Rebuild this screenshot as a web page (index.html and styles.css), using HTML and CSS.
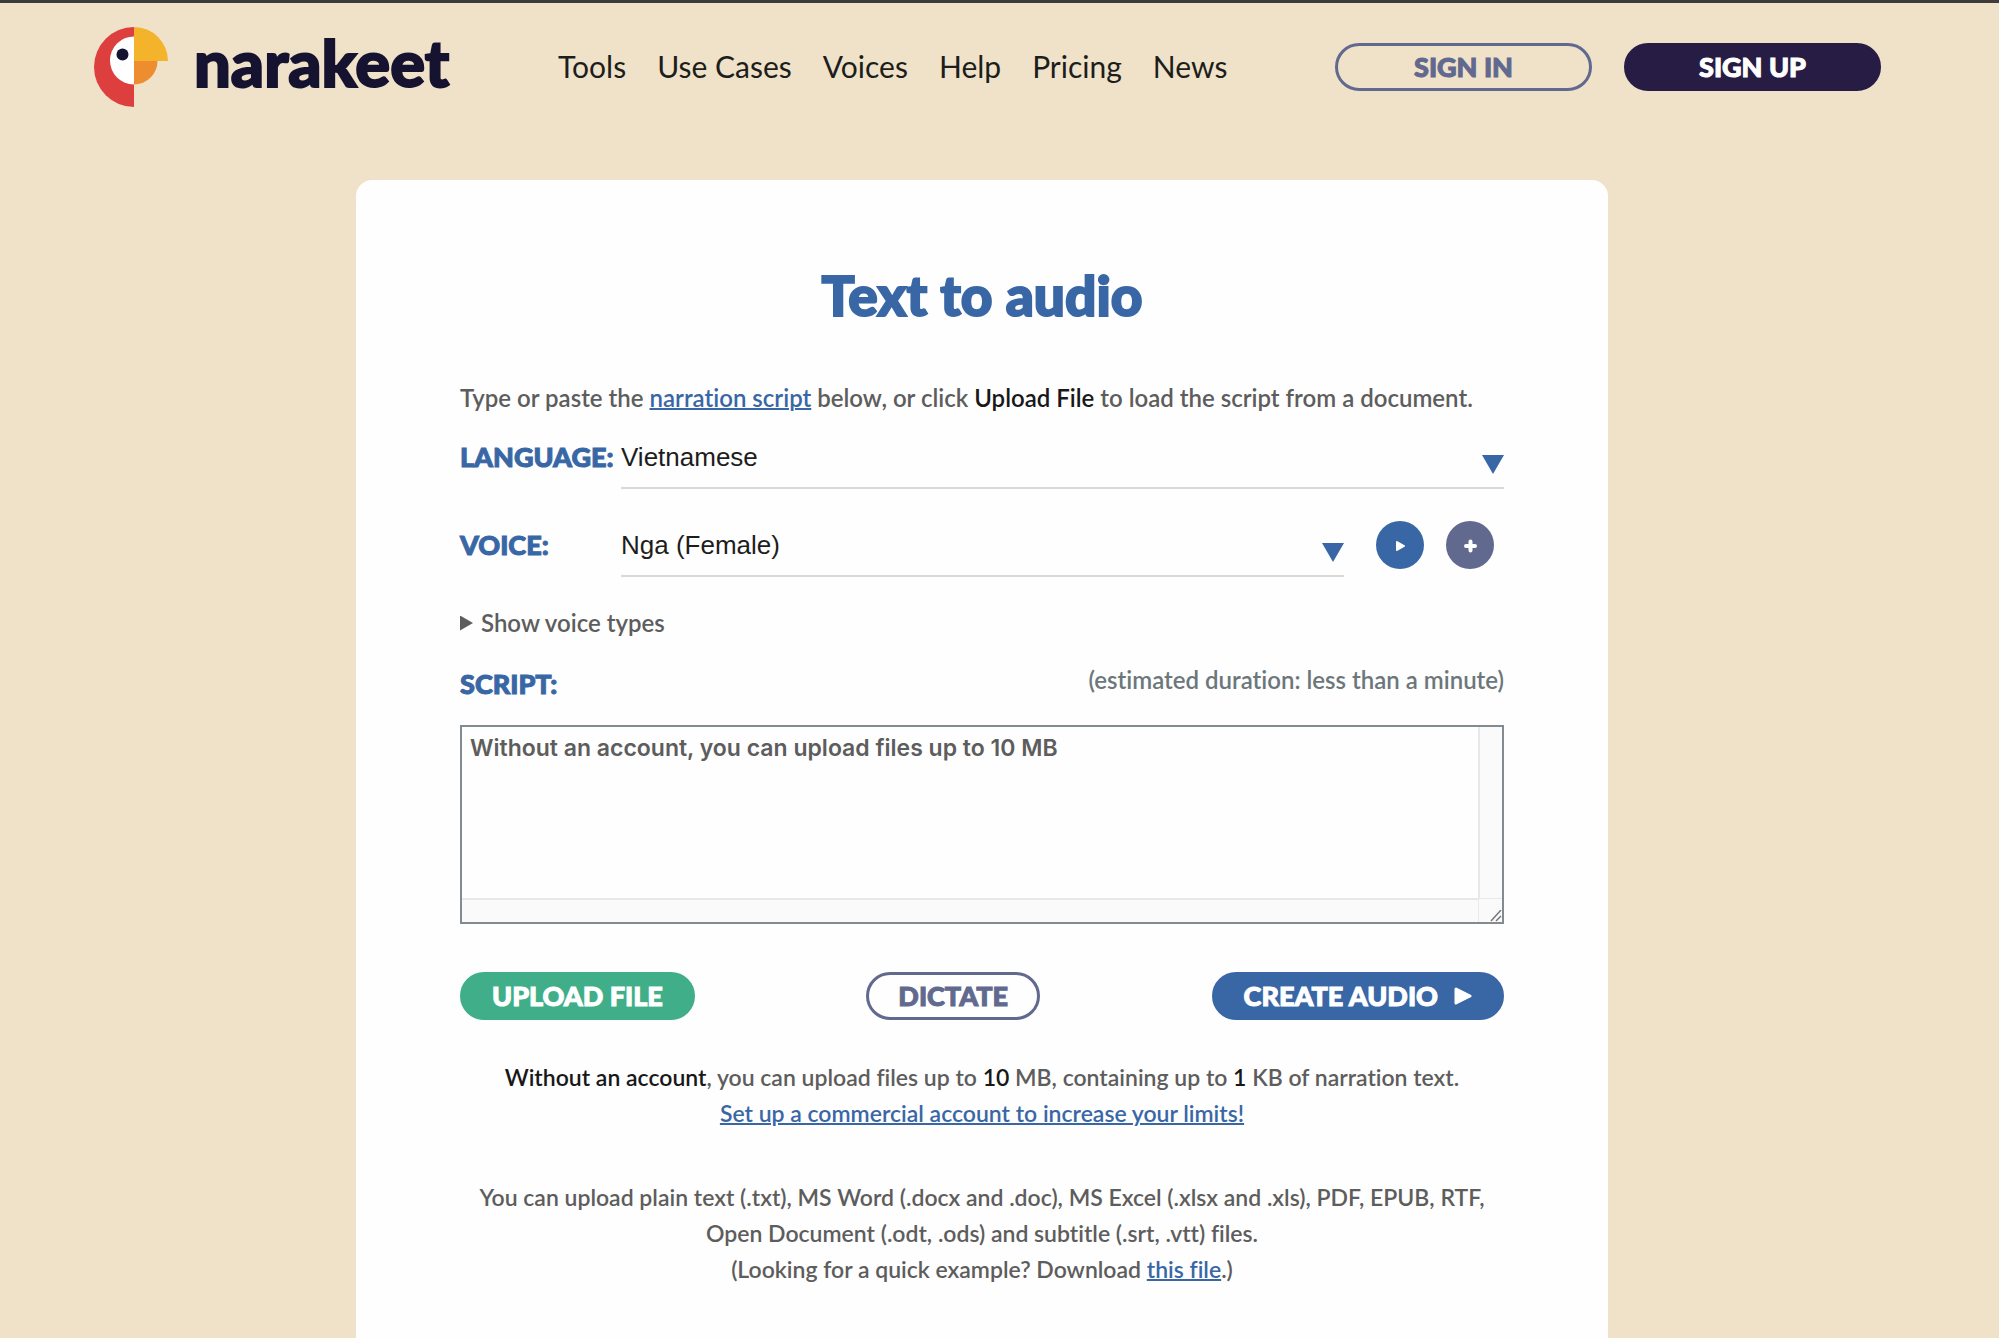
FILE: index.html
```html
<!DOCTYPE html>
<html lang="en">
<head>
<meta charset="utf-8">
<meta name="viewport" content="width=device-width, initial-scale=1">
<title>Text to audio - narakeet</title>
<link rel="stylesheet" href="styles.css">
</head>
<body>
<header class="site-header">
  <a class="brand" href="#">
    <svg class="brand-mark" viewBox="0 0 74 80" aria-hidden="true">
      <path fill="#dd3f3e" d="M40 0A40 40 0 0 0 40 80Z"/>
      <path fill="#fff" d="M40 9.500A24 24 0 0 0 40 57.500Z"/>
      <path fill="#f3b42c" d="M40 0A34 34 0 0 1 74 34H40Z"/>
      <path fill="#ee8d2f" d="M40 34H63.500A23.500 23.500 0 0 1 40 57.500Z"/>
      <circle cx="28.500" cy="27.500" r="6" fill="#15132f"/>
    </svg>
    <span class="brand-name">narakeet</span>
  </a>
  <nav class="site-nav">
    <a href="#">Tools</a>
    <a href="#">Use Cases</a>
    <a href="#">Voices</a>
    <a href="#">Help</a>
    <a href="#">Pricing</a>
    <a href="#">News</a>
  </nav>
  <div class="account">
    <a class="pill pill-outline" href="#">SIGN IN</a>
    <a class="pill pill-dark" href="#">SIGN UP</a>
  </div>
</header>
<main class="page">
  <form class="card">
    <h1 class="title">Text to audio</h1>
    <p class="intro">Type or paste the <a href="#">narration script</a> below, or click <strong>Upload File</strong> to load the script from a document.</p>
    <div class="field">
      <label class="label" for="language">LANGUAGE:</label>
      <div class="picker">
        <select id="language"><option>Vietnamese</option></select>
        <svg class="arrow" viewBox="0 0 22 19" aria-hidden="true"><path d="M0 0H22L11 19Z"/></svg>
      </div>
    </div>
    <div class="field">
      <label class="label" for="voice">VOICE:</label>
      <div class="picker">
        <select id="voice"><option>Nga (Female)</option></select>
        <svg class="arrow" viewBox="0 0 22 19" aria-hidden="true"><path d="M0 0H22L11 19Z"/></svg>
      </div>
      <div class="voice-actions">
        <button type="button" class="round round-play" aria-label="Play sample">
          <svg viewBox="0 0 48 48" aria-hidden="true"><path d="M21 21L28 25L21 29Z" fill="#fff" stroke="#fff" stroke-width="2" stroke-linejoin="round"/></svg>
        </button>
        <button type="button" class="round round-add" aria-label="Add voice">
          <svg viewBox="0 0 48 48" aria-hidden="true"><path d="M24.500 20.500V29.500M20 25H29" stroke="#fff" stroke-width="4" stroke-linecap="round"/></svg>
        </button>
      </div>
    </div>
    <details class="voice-types">
      <summary>Show voice types</summary>
    </details>
    <div class="script-head">
      <label class="label" for="script">SCRIPT:</label>
      <span class="duration">(estimated duration: less than a minute)</span>
    </div>
    <div class="editor">
      <textarea id="script" class="editor-text">Without an account, you can upload files up to 10 MB</textarea>
      <div class="track track-right"></div>
      <div class="track track-bottom"></div>
      <div class="track track-corner">
        <svg class="grip" viewBox="0 0 12 12" aria-hidden="true"><path d="M1 11L11 0M6 11L11 6" stroke="#777" stroke-width="1.500" fill="none"/></svg>
      </div>
    </div>
    <div class="actions">
      <button type="button" class="pill pill-green">UPLOAD FILE</button>
      <button type="button" class="pill pill-outline">DICTATE</button>
      <button type="submit" class="pill pill-blue">CREATE AUDIO
        <svg class="play" viewBox="0 0 18 18" aria-hidden="true"><path d="M2 2L16 9L2 16Z" fill="#fff" stroke="#fff" stroke-width="3" stroke-linejoin="round"/></svg>
      </button>
    </div>
    <p class="note"><strong>Without an account</strong>, you can upload files up to <strong>10</strong> MB, containing up to <strong>1</strong> KB of narration text.<br><a href="#">Set up a commercial account to increase your limits!</a></p>
    <p class="note">You can upload plain text (.txt), MS Word (.docx and .doc), MS Excel (.xlsx and .xls), PDF, EPUB, RTF, Open Document (.odt, .ods) and subtitle (.srt, .vtt) files.<br>(Looking for a quick example? Download <a href="#">this file</a>.)</p>
  </form>
</main>
</body>
</html>
```
FILE: styles.css
```css
* { box-sizing: border-box; }

body {
  margin: 0;
  min-height: 100vh;
  display: flex;
  flex-direction: column;
  border-top: 3px solid #3d3c3a;
  background: #efe2c9;
  color: #5d5d5d;
  font: 600 24px/36px Lato, sans-serif;
  font-variant-ligatures: none;
}

a { color: #3967a6; text-decoration-thickness: 2px; }

strong { color: #181818; font-weight: 600; }

.site-header {
  display: flex;
  align-items: center;
  padding: 24px 118px 0 94px;
}

.brand {
  display: flex;
  align-items: flex-start;
  gap: 26px;
  width: 464px;
  text-decoration: none;
}

.brand-mark { width: 74px; height: 80px; }

.brand-name {
  color: #15132f;
  font: 900 65px/70px Lato, sans-serif;
  -webkit-text-stroke: 2px;
}

.site-nav {
  display: flex;
  gap: 31px;
  margin-right: auto;
  padding-bottom: 2px;
}

.site-nav a {
  color: #1d1d1b;
  font-size: 30px;
  font-weight: 400;
  text-decoration: none;
}

.account { display: flex; gap: 32px; }

.account .pill { width: 257px; }

.pill {
  display: flex;
  align-items: center;
  justify-content: center;
  gap: 16px;
  height: 48px;
  padding: 0 29px;
  border: 3px solid;
  border-radius: 24px;
  font: 900 27px/32px Lato, sans-serif;
  -webkit-text-stroke: 1px;
  text-decoration: none;
}

.pill-outline { border-color: #61698f; background: transparent; color: #61698f; }
.pill-dark { border-color: #261c44; background: #261c44; color: #fff; }
.pill-green { border-color: #40af89; background: #40af89; color: #fff; }
.pill-blue { border-color: #3967a6; background: #3967a6; color: #fff; }

.play { width: 18px; height: 18px; }

.page {
  flex: 1;
  display: flex;
  justify-content: center;
  padding: 73px 35px 0 0;
}

.card {
  width: 90%;
  max-width: 1252px;
  padding: 84px 104px 48px;
  border-radius: 16px 16px 0 0;
  background: #fefefe;
}

.title {
  margin: 0;
  color: #3967a6;
  font: 900 55px/62px Lato, sans-serif;
  -webkit-text-stroke: 2px;
  text-align: center;
}

.intro { margin: 54px 0 13px; }

.field {
  display: flex;
  align-items: flex-start;
  height: 88px;
}

.label {
  width: 161px;
  color: #3967a6;
  font: 900 27px/56px Lato, sans-serif;
  -webkit-text-stroke: 1px;
}

.picker {
  flex: 1;
  display: grid;
  height: 60px;
  border-bottom: 2px solid #dad7d6;
}

.picker select {
  grid-area: 1 / 1;
  appearance: none;
  width: 100%;
  height: 56px;
  padding: 0;
  border: 0;
  background: transparent;
  color: #1d1d1b;
  font: 26px "Liberation Sans", Arial, sans-serif;
}

.arrow {
  grid-area: 1 / 1;
  justify-self: end;
  align-self: center;
  width: 22px;
  height: 19px;
  margin-top: 12px;
  fill: #3967a6;
  pointer-events: none;
}

.voice-actions {
  display: flex;
  gap: 22px;
  padding: 4px 10px 0 32px;
}

.round {
  width: 48px;
  height: 48px;
  padding: 0;
  border: 0;
  border-radius: 50%;
}

.round svg { display: block; }
.round-play { background: #3967a6; }
.round-add { background: #61698f; }

.voice-types summary {
  display: flex;
  align-items: center;
  gap: 8px;
}

.voice-types summary::before {
  content: "";
  width: 13px;
  height: 15px;
  background: #5d5d5d;
  clip-path: polygon(0 0, 100% 50%, 0 100%);
}

.script-head {
  display: flex;
  justify-content: space-between;
  margin-top: 15px;
  height: 69px;
}

.duration { line-height: 48px; color: #6c777b; }

.editor {
  display: grid;
  grid-template: 1fr 24px / 1fr 24px;
  height: 199px;
  border: 2px solid #828b8f;
  background: #fefefe;
}

.editor-text {
  padding: 7px 8px;
  border: 0;
  outline: 0;
  resize: none;
  overflow: hidden;
  background: transparent;
  color: #5d5d5d;
  font: 600 23px/28px Inter, sans-serif;
}

.track { background: #fafafb; }
.track-right { border-left: 2px solid #e8e8e8; }
.track-bottom { border-top: 2px solid #e8e8e8; }

.track-corner {
  display: flex;
  align-items: flex-end;
  justify-content: flex-end;
  border-top: 1px solid #e8e8e8;
  border-left: 1px solid #e8e8e8;
}

.grip { width: 12px; height: 12px; }

.actions {
  display: flex;
  justify-content: space-between;
  margin: 48px 0 39px;
}

.note {
  margin: 0 0 48px;
  font-size: 23px;
  text-align: center;
}
```
